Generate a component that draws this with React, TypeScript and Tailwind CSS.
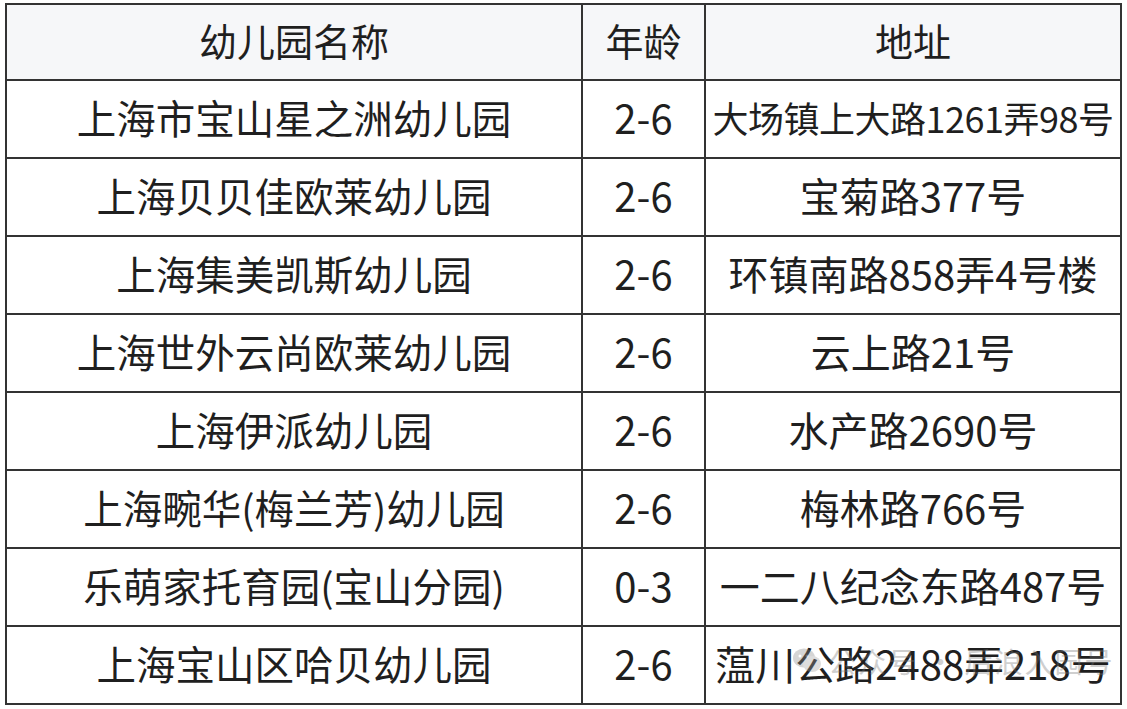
import React from "react";

const rows: [string, string, string][] = [
  ["上海市宝山星之洲幼儿园", "2-6", "大场镇上大路1261弄98号"],
  ["上海贝贝佳欧莱幼儿园", "2-6", "宝菊路377号"],
  ["上海集美凯斯幼儿园", "2-6", "环镇南路858弄4号楼"],
  ["上海世外云尚欧莱幼儿园", "2-6", "云上路21号"],
  ["上海伊派幼儿园", "2-6", "水产路2690号"],
  ["上海畹华(梅兰芳)幼儿园", "2-6", "梅林路766号"],
  ["乐萌家托育园(宝山分园)", "0-3", "一二八纪念东路487号"],
  ["上海宝山区哈贝幼儿园", "2-6", "蕰川公路2488弄218号"],
];

const font = { fontFamily: '"Noto Sans CJK SC", "Noto Sans", sans-serif' };

export default function App() {
  return (
    <div className="w-[1127px] h-[709px] bg-white pt-[3px] pl-[5px] text-[#1f1f1f]" style={font}>
      <div className="relative grid w-max grid-cols-[576px_123px_416px] border-l-2 border-t-2 border-[#333]">
        {["幼儿园名称", "年龄", "地址"].map((h) => (
          <div
            key={h}
            className="flex h-[76px] items-center justify-center border-b-2 border-r-2 border-[#333] bg-[#f6f7f9] pb-1 text-[38px] leading-none"
          >
            {h}
          </div>
        ))}
        {rows.map((r, i) =>
          r.map((c, j) => (
            <div
              key={`${i}-${j}`}
              className={`flex h-[78px] items-center justify-center whitespace-nowrap border-b-2 border-r-2 border-[#333] pb-1 leading-none ${
                j === 1
                  ? "text-[40px]"
                  : j === 2
                  ? i === 0
                    ? "text-[36px] tracking-[-0.5px]"
                    : "text-[40px]"
                  : "text-[39.5px]"
              }`}
            >
              {c}
            </div>
          ))
        )}
        <div className="pointer-events-none absolute left-[785px] top-[642px] flex items-center gap-[6px] opacity-35">
          <svg width="30" height="28" viewBox="0 0 30 28">
            <ellipse cx="12" cy="11" rx="11" ry="9.5" fill="#8a8a8a" />
            <ellipse cx="20" cy="17" rx="9" ry="8" fill="#a0a0a0" />
            <circle cx="8" cy="9" r="1.5" fill="#fff" />
            <circle cx="15" cy="9" r="1.5" fill="#fff" />
          </svg>
          <span className="text-[28px] leading-none text-[#777] tracking-[2px]">公众号 · 后浪入园号</span>
        </div>
      </div>
    </div>
  );
}
